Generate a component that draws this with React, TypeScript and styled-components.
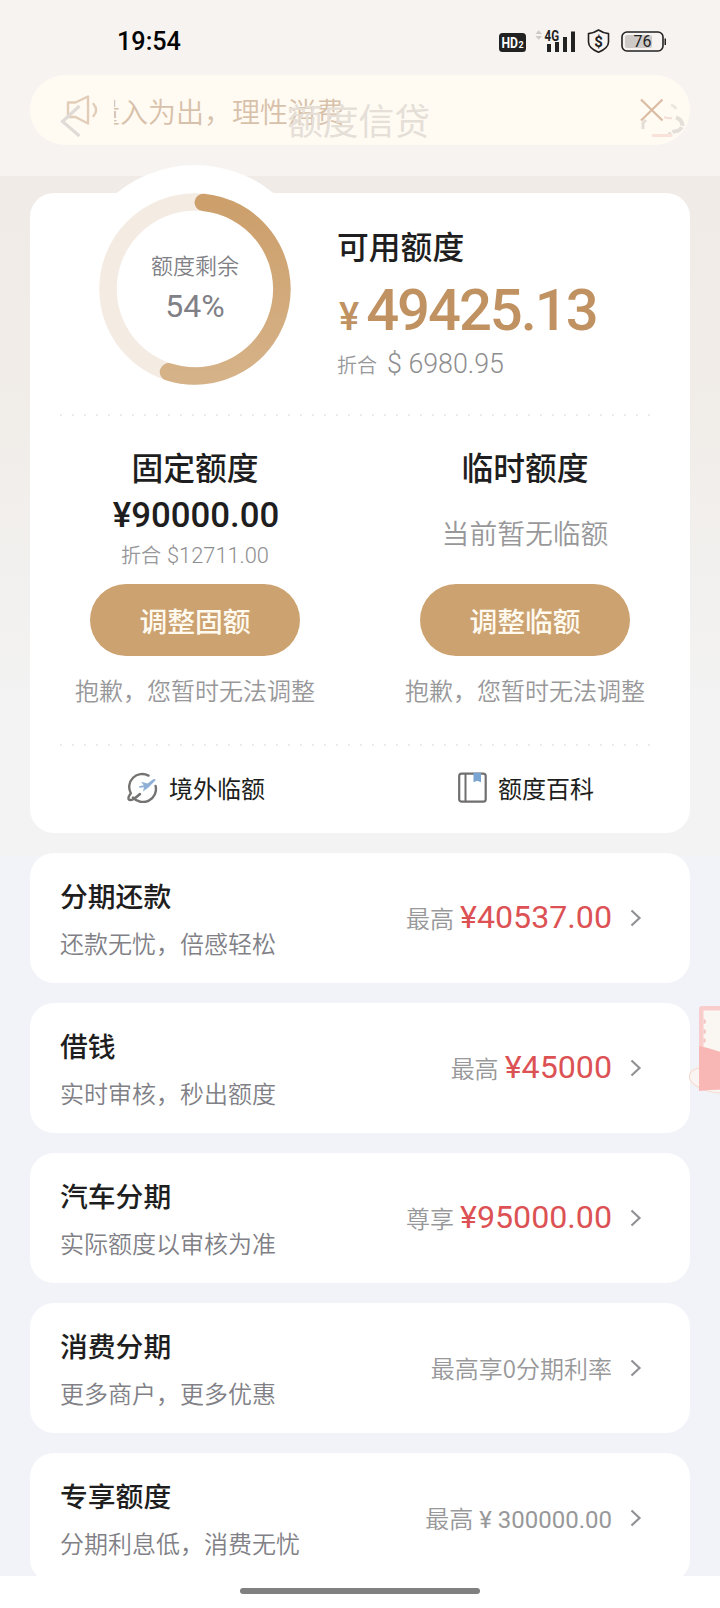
import React from "react";
import styled, { createGlobalStyle } from "styled-components";

const cjk = `"Noto Sans CJK SC", sans-serif`;
const num = `Roboto, "Noto Sans CJK SC", sans-serif`;

const GlobalStyle = createGlobalStyle`
  * { box-sizing: border-box; }
  body { margin: 0; background: #fff; font-family: ${cjk}; }
`;

const Screen = styled.div`
  position: relative;
  width: 720px;
  height: 1608px;
  overflow: hidden;
  display: flex;
  flex-direction: column;
  background: linear-gradient(180deg, #f0ebe6 176px, #f1ede9 430px, #f3f3f3 700px, #f3f3f3 855px, #f2f3f8 856px);
`;

const Header = styled.header`
  flex: none;
  height: 176px;
  background: #f7f3f0;
  padding: 0 30px;
`;

const StatusBar = styled.div`
  height: 75px;
  display: flex;
  justify-content: space-between;
  align-items: center;
  padding: 7px 22px 0 87px;
`;

const Text = styled.span<{
  $size: number;
  $line?: number;
  $color?: string;
  $weight?: number;
  $spacing?: number;
  $num?: boolean;
}>`
  display: block;
  white-space: pre;
  font-family: ${(p) => (p.$num ? num : cjk)};
  font-size: ${(p) => p.$size}px;
  line-height: ${(p) => p.$line ?? 30}px;
  color: ${(p) => p.$color ?? "#1e1e20"};
  font-weight: ${(p) => p.$weight ?? 400};
  letter-spacing: ${(p) => p.$spacing ?? 0}px;
`;

const Clock = styled(Text)`
  padding-top: 2px;
`;

const Notice = styled.div`
  position: relative;
  height: 70px;
  border-radius: 35px;
  background: #fffbf3;
  display: flex;
  align-items: center;
  padding: 0 26px 0 36px;
`;

const Ticker = styled.div`
  flex: 1;
  margin-left: 16px;
  padding-top: 2px;
  overflow: hidden;
  display: flex;
`;

const TickerText = styled(Text)`
  margin-left: -22px;
`;

const FadedTitleBar = styled.div`
  position: absolute;
  inset: 12px 0 auto 0;
  height: 68px;
  display: flex;
  justify-content: space-between;
  align-items: center;
  padding: 0 4px 0 30px;
`;

const FadedTitle = styled(Text)`
  margin: -4px 0 0 -5px;
`;

const Main = styled.main`
  flex: none;
  height: 1400px;
  padding: 17px 30px 0;
  display: flex;
  flex-direction: column;
  gap: 20px;
`;

const CreditCard = styled.section`
  flex: none;
  height: 640px;
  border-radius: 24px;
  background: #fff;
  display: flex;
  flex-direction: column;
`;

const Summary = styled.div`
  height: 221px;
  display: flex;
`;

const Gauge = styled.div`
  flex: none;
  width: 248px;
  height: 248px;
  margin: -28px 0 0 41px;
  display: grid;
  place-items: center;
  & > * { grid-area: 1 / 1; }
`;

const GaugeLabel = styled.div`
  display: flex;
  flex-direction: column;
  align-items: center;
  gap: 10px;
  margin-top: -6px;
`;

const Available = styled.div`
  padding: 31px 0 0 18px;
`;

const Inline = styled.div<{ $gap?: number; $top?: number; $left?: number }>`
  display: flex;
  align-items: baseline;
  gap: ${(p) => p.$gap ?? 0}px;
  margin-top: ${(p) => p.$top ?? 0}px;
  margin-left: ${(p) => p.$left ?? 0}px;
`;

const Dots = styled.div`
  flex: none;
  height: 2px;
  margin: 0 38px 0 30px;
  background: repeating-linear-gradient(90deg, #ebebeb 0 2px, transparent 2px 12px);
`;

const Columns = styled.div<{ $height: number }>`
  height: ${(p) => p.$height}px;
  display: grid;
  grid-template-columns: 1fr 1fr;
`;

const Column = styled.div`
  padding-top: 29px;
  display: flex;
  flex-direction: column;
  align-items: center;
`;

const Detail = styled.div`
  height: 97px;
  padding-bottom: 7px;
  display: flex;
  flex-direction: column;
  align-items: center;
  justify-content: center;
`;

const Button = styled.button`
  width: 210px;
  height: 72px;
  border: 0;
  border-radius: 36px;
  padding: 0;
  margin-bottom: 19px;
  background: #cca270;
  display: flex;
  justify-content: center;
  align-items: center;
`;

const LinkItem = styled.div`
  display: flex;
  justify-content: center;
  align-items: center;
  gap: 11px;
  padding: 0 0 4px 2px;
`;

const OfferCard = styled.section`
  flex: none;
  height: 130px;
  border-radius: 24px;
  background: #fff;
  padding: 0 48px 0 30px;
  display: flex;
  justify-content: space-between;
  align-items: center;
`;

const OfferValue = styled.div`
  display: flex;
  align-items: center;
  gap: 18px;
`;

const Footer = styled.footer`
  position: relative;
  flex: none;
  height: 32px;
  background: #fff;
  display: flex;
  justify-content: center;
  padding-top: 12px;
`;

const HomeBar = styled.div`
  width: 240px;
  height: 6px;
  border-radius: 3px;
  background: #808080;
`;

const Envelope = styled.svg`
  position: absolute;
  top: 1002px;
  right: -1px;
`;

const GREY = "#98989a";
const SLATE = "#808086";
const GOLD = "#c09161";
const RED = "#dc5254";

const StatusIcons = () => (
  <svg width="170" height="30" viewBox="498 26 170 30">
    <rect x="499" y="33" width="27" height="19" rx="3.5" fill="#222" />
    <text x="501.5" y="48" fontFamily="Roboto" fontWeight="700" fontSize="14.5" fill="#fff" textLength="16.5" lengthAdjust="spacingAndGlyphs">HD</text>
    <text x="518.5" y="48" fontFamily="Roboto" fontWeight="700" fontSize="9" fill="#fff">2</text>
    <path d="M535.5 34l3.2-3.8 3.2 3.8zM535.5 36l3.2 3.8 3.2-3.8z" fill="#cdc9c6" />
    <text x="544.5" y="40.5" fontFamily="Roboto" fontWeight="700" fontSize="14" fill="#222" textLength="14.5" lengthAdjust="spacingAndGlyphs">4G</text>
    <path d="M547 44h4v8h-4zM555 42h4v10h-4zM563 37h4v15h-4zM571 31.500h4V52h-4z" fill="#222" />
    <path d="M598.500 30c3 2 6.500 3.200 10 3.600v8.400c0 5-4.500 8-10 10.300-5.500-2.300-10-5.300-10-10.300v-8.400c3.500-.4 7-1.600 10-3.600z" fill="none" stroke="#222" strokeWidth="1.600" strokeLinejoin="round" />
    <text x="598.500" y="46.500" textAnchor="middle" fontFamily="Roboto" fontWeight="700" fontSize="15" fill="#222">$</text>
    <rect x="622" y="32" width="41" height="19" rx="5" fill="none" stroke="#222" strokeWidth="1.600" />
    <rect x="625" y="35" width="27" height="13" rx="2" fill="#cdcac8" />
    <path d="M664.500 38.500h1.500v6.500h-1.500z" fill="#222" />
    <text x="642.500" y="47" textAnchor="middle" fontFamily="Roboto" fontSize="16" fill="#222">76</text>
  </svg>
);

const SpeakerIcon = () => (
  <svg width="32" height="30" viewBox="0 0 32 30" fill="none" stroke="#e2cdb8" strokeWidth="2.400" strokeLinejoin="round" strokeLinecap="round">
    <path d="M2 7.500h7.500L22 1.500v27L9.500 22H2z" />
    <path d="M27.500 9c3.500 4 3.500 8 0 12" />
  </svg>
);

const CloseIcon = () => (
  <svg width="24" height="24" viewBox="0 0 24 24" stroke="#dbbca2" strokeWidth="2.200" fill="none">
    <path d="M1 1.500l21.500 21M22.500 1.500l-21.500 21" />
  </svg>
);

const BackIcon = () => (
  <svg width="22" height="34" viewBox="0 0 22 34" stroke="#e0dbd6" strokeWidth="3.200" fill="none">
    <path d="M19.500 2L2.500 17.500l17 14.500" />
  </svg>
);

const ServiceIcon = () => (
  <svg width="46" height="34" viewBox="0 0 46 34" fill="none">
    <path d="M3 25v-6l3-3" stroke="#e3ddd6" strokeWidth="3" />
    <path d="M24 13q4 2 8 1" stroke="#f3dfd5" strokeWidth="2" />
    <path d="M31 1q4 1 5 4" stroke="#ebe5de" strokeWidth="2.500" />
    <path d="M36 13.500q6 2 6.500 8-2 6-8.500 6-3 3-6 3" stroke="#e4dfd9" strokeWidth="4" strokeDasharray="11 1.500" />
    <path d="M13 31.500h18" stroke="#f8e2da" strokeWidth="3" strokeLinecap="round" />
  </svg>
);

const Ring = () => (
  <svg width="248" height="248" viewBox="0 0 248 248" fill="none">
    <defs>
      <linearGradient id="arc" x1="0" y1="0" x2="0" y2="1">
        <stop offset="0" stopColor="#cc9f6b" />
        <stop offset="1" stopColor="#d6b288" />
      </linearGradient>
    </defs>
    <circle cx="124" cy="124" r="124" fill="#fff" />
    <circle cx="124" cy="124" r="87" stroke="#f4ebe3" strokeWidth="17.500" />
    <path d="M132.300 37.400A87 87 0 1 1 97.500 206.900" stroke="url(#arc)" strokeWidth="17.500" strokeLinecap="round" />
  </svg>
);

const PlaneIcon = () => (
  <svg width="31" height="31" viewBox="0 0 31 31" fill="none">
    <path d="M21.500 3.600A13 13 0 0 0 3.800 21.200c-2.200 3-3 5-2 6.300 1.500 1.600 6.500-1.200 11.200-5.500M6 25.400A13 13 0 0 0 28.600 14" stroke="#757372" strokeWidth="2.400" strokeLinecap="round" />
    <path d="M14 9.800l6.500 1.700 5-3.800c1.800-1.300 3.500-.7 2.800.8L21.500 15.500l-5.500 4 1-4.300-4.500.6-.5-1.600 4.800-1z" fill="#8fb0d6" />
  </svg>
);

const BookIcon = () => (
  <svg width="29" height="31" viewBox="0 0 29 31" fill="none">
    <rect x="1.200" y="1.700" width="26.500" height="28" rx="2.500" stroke="#706e6e" strokeWidth="2.200" />
    <path d="M7.500 2v27.500" stroke="#706e6e" strokeWidth="2" />
    <path d="M15.500 .8h7.500v9.400l-3.700-1.500-3.800 1.500z" fill="#7aa5d2" />
  </svg>
);

const Chevron = () => (
  <svg width="12" height="18" viewBox="0 0 12 18" fill="none" stroke="#929296" strokeWidth="2.200">
    <path d="M1.500 1.500L9.500 9l-8 7.500" />
  </svg>
);

type Offer = { title: string; note: string; prefix: string; amount?: string; plain?: string };

const offers: Offer[] = [
  { title: "分期还款", note: "还款无忧，倍感轻松", prefix: "最高", amount: "¥40537.00" },
  { title: "借钱", note: "实时审核，秒出额度", prefix: "最高", amount: "¥45000" },
  { title: "汽车分期", note: "实际额度以审核为准", prefix: "尊享", amount: "¥95000.00" },
  { title: "消费分期", note: "更多商户，更多优惠", prefix: "最高享0分期利率" },
  { title: "专享额度", note: "分期利息低，消费无忧", prefix: "最高", plain: "¥ 300000.00" },
];

const OfferRow = ({ title, note, prefix, amount, plain }: Offer) => (
  <OfferCard>
    <div>
      <Text $size={27.800} $weight={500} $line={38}>{title}</Text>
      <Inline $top={11}><Text $size={24} $weight={350} $color={SLATE} $line={36}>{note}</Text></Inline>
    </div>
    <OfferValue>
      <Inline $gap={6}>
        <Text $size={24} $weight={350} $color={GREY} $line={36}>{prefix}</Text>
        {amount && <Text $num $size={32.200} $color={RED} $line={34}>{amount}</Text>}
        {plain && <Text $num $size={24} $color={GREY} $line={34}>{plain}</Text>}
      </Inline>
      <Chevron />
    </OfferValue>
  </OfferCard>
);

export default function App() {
  return (
    <Screen>
      <GlobalStyle />
      <Header>
        <StatusBar>
          <Clock $num $size={25.200} $weight={500} $color="#050505">19:54</Clock>
          <StatusIcons />
        </StatusBar>
        <Notice>
          <FadedTitleBar>
            <BackIcon />
            <FadedTitle $size={35.800} $color="#e5dfd8" $line={44}>额度信贷</FadedTitle>
            <ServiceIcon />
          </FadedTitleBar>
          <SpeakerIcon />
          <Ticker>
            <TickerText $size={28} $weight={350} $line={40} $color="#d8c1aa">量入为出，理性消费</TickerText>
          </Ticker>
          <CloseIcon />
        </Notice>
      </Header>

      <Main>
        <CreditCard>
          <Summary>
            <Gauge>
              <Ring />
              <GaugeLabel>
                <Text $size={22} $weight={350} $color={SLATE}>额度剩余</Text>
                <Text $num $size={32} $color={SLATE} $line={34}>54%</Text>
              </GaugeLabel>
            </Gauge>
            <Available>
              <Text $size={31.800} $weight={500} $line={42}>可用额度</Text>
              <Inline $gap={7} $top={14} $left={2}>
                <Text $num $size={38} $weight={500} $color={GOLD} $line={60}>¥</Text>
                <Text $num $size={58} $weight={500} $color={GOLD} $line={60} $spacing={-2.050}>49425.13</Text>
              </Inline>
              <Inline $gap={10} $top={2}>
                <Text $size={20} $weight={350} $color={GREY}>折合</Text>
                <Text $num $size={26.800} $weight={300} $color="#8e8e90">$ 6980.95</Text>
              </Inline>
            </Available>
          </Summary>
          <Dots />
          <Columns $height={329}>
            <Column>
              <Text $size={31.800} $weight={500} $line={42}>固定额度</Text>
              <Detail>
                <Inline $left={2}><Text $num $size={34.800} $weight={500} $line={44}>¥90000.00</Text></Inline>
                <Inline $gap={6} $top={3}>
                  <Text $size={20} $weight={350} $color={GREY}>折合</Text>
                  <Text $num $size={21.800} $weight={300} $color="#8e8e90">$12711.00</Text>
                </Inline>
              </Detail>
              <Button><Text $size={27.800} $weight={500} $color="#fffaf0">调整固额</Text></Button>
              <Text $size={24} $weight={350} $color={GREY}>抱歉，您暂时无法调整</Text>
            </Column>
            <Column>
              <Text $size={31.800} $weight={500} $line={42}>临时额度</Text>
              <Detail><Text $size={27.800} $weight={350} $color={GREY}>当前暂无临额</Text></Detail>
              <Button><Text $size={27.800} $weight={500} $color="#fffaf0">调整临额</Text></Button>
              <Text $size={24} $weight={350} $color={GREY}>抱歉，您暂时无法调整</Text>
            </Column>
          </Columns>
          <Dots />
          <Columns $height={87}>
            <LinkItem><PlaneIcon /><Text $size={24}>境外临额</Text></LinkItem>
            <LinkItem><BookIcon /><Text $size={24}>额度百科</Text></LinkItem>
          </Columns>
        </CreditCard>
        {offers.map((o) => <OfferRow key={o.title} {...o} />)}
      </Main>

      <Footer><HomeBar /></Footer>

      <Envelope width="33" height="96" viewBox="0 0 33 96" fill="none">
        <ellipse cx="25" cy="78" rx="24" ry="12" transform="rotate(12 25 78)" fill="#faf5f3" stroke="#f7ddd2" strokeWidth="1.200" />
        <path d="M11 7q0-3 3-3h19v84H11z" fill="#f8cdcb" />
        <path d="M15.500 8.500H33V60H15.500z" fill="#faf7f3" />
        <path d="M15.500 17a2.500 2.500 0 0 1 0 5M15.500 27a2.500 2.500 0 0 1 0 5M15.500 36a2.500 2.500 0 0 1 0 5" fill="#f3c9c6" />
        <path d="M11 44q11 2 22 6v37l-22 2z" fill="#f8b6b5" />
      </Envelope>
    </Screen>
  );
}
